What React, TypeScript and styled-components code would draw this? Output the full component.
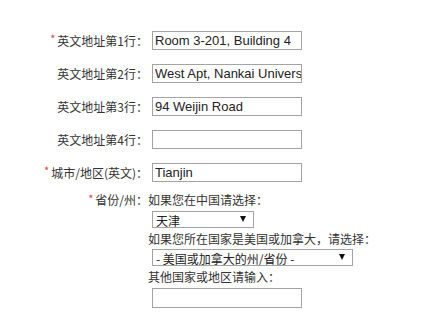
import React from 'react';
import styled, { createGlobalStyle } from 'styled-components';

const GlobalStyle = createGlobalStyle`
  body {
    margin: 0;
    background: #ffffff;
    font-family: "Liberation Sans", "Noto Sans CJK SC", sans-serif;
    color: #333;
  }
`;

const Form = styled.div`
  display: flex;
  flex-direction: column;
  padding-top: 31px;
`;

const Row = styled.div<{ $mt?: number }>`
  display: grid;
  grid-template-columns: 148px 1fr;
  margin-top: ${p => p.$mt || 0}px;
`;

const Label = styled.label<{ $top?: boolean }>`
  display: flex;
  justify-content: flex-end;
  align-items: ${p => (p.$top ? 'flex-start' : 'center')};
  font-family: "Noto Sans CJK SC", sans-serif;
  font-size: 12px;
  line-height: 18px;
  color: #333;
  white-space: nowrap;
`;

const Star = styled.span`
  color: #e03c3c;
  font-size: 11px;
  line-height: 10px;
  align-self: flex-start;
  margin-right: 2px;
  margin-top: 2px;
`;

const Field = styled.div`
  display: flex;
  flex-direction: column;
  align-items: flex-start;
`;

const TextInput = styled.input<{ $mt?: number; $h?: number }>`
  box-sizing: border-box;
  width: 150px;
  height: ${p => p.$h || 19}px;
  margin: ${p => p.$mt || 0}px 0 0 4px;
  padding: 0 0 0 2px;
  border: 1px solid #a3a3a3;
  font-family: "Liberation Sans", sans-serif;
  font-size: 13px;
  color: #222;
  outline: none;
`;

const Hint = styled.div<{ $mt?: number }>`
  font-family: "Noto Sans CJK SC", sans-serif;
  font-size: 12px;
  line-height: 18px;
  color: #333;
  margin-top: ${p => p.$mt || 0}px;
`;

const SelectWrap = styled.div<{ $w: number; $mt?: number }>`
  position: relative;
  width: ${p => p.$w}px;
  height: 17px;
  margin: ${p => p.$mt || 0}px 0 0 4px;
`;

const Select = styled.select`
  appearance: none;
  -webkit-appearance: none;
  box-sizing: border-box;
  width: 100%;
  height: 100%;
  border: 1px solid #a3a3a3;
  border-radius: 0;
  background: #fff;
  padding: 0 0 0 3px;
  font-family: "Noto Sans CJK SC", sans-serif;
  font-size: 12px;
  color: #222;
  outline: none;
`;

const Arrow = styled.span`
  position: absolute;
  right: 8px;
  top: 5px;
  width: 0;
  height: 0;
  border-left: 3.5px solid transparent;
  border-right: 3.5px solid transparent;
  border-top: 6px solid #111;
  pointer-events: none;
`;

const rows = [
  { label: '英文地址第1行：', value: 'Room 3-201, Building 4', required: true },
  { label: '英文地址第2行：', value: 'West Apt, Nankai University', required: false },
  { label: '英文地址第3行：', value: '94 Weijin Road', required: false },
  { label: '英文地址第4行：', value: '', required: false },
  { label: '城市/地区(英文)：', value: 'Tianjin', required: true },
];

const App: React.FC = () => {
  return (
    <>
      <GlobalStyle />
      <Form>
        {rows.map((r, i) => (
          <Row key={r.label} $mt={i === 0 ? 0 : 14}>
            <Label>
              {r.required && <Star>*</Star>}
              {r.label}
            </Label>
            <Field>
              <TextInput defaultValue={r.value} />
            </Field>
          </Row>
        ))}
        <Row $mt={9}>
          <Label $top>
            <Star>*</Star>
            省份/州：
          </Label>
          <Field>
            <Hint>如果您在中国请选择：</Hint>
            <SelectWrap $w={102} $mt={2}>
              <Select defaultValue="天津">
                <option>天津</option>
                <option>北京</option>
                <option>上海</option>
              </Select>
              <Arrow />
            </SelectWrap>
            <Hint $mt={2}>如果您所在国家是美国或加拿大，请选择：</Hint>
            <SelectWrap $w={201} $mt={1}>
              <Select defaultValue="">
                <option value="">- 美国或加拿大的州/省份 -</option>
              </Select>
              <Arrow />
            </SelectWrap>
            <Hint $mt={2}>其他国家或地区请输入：</Hint>
            <TextInput $mt={2} $h={20} />
          </Field>
        </Row>
      </Form>
    </>
  );
};

export default App;
